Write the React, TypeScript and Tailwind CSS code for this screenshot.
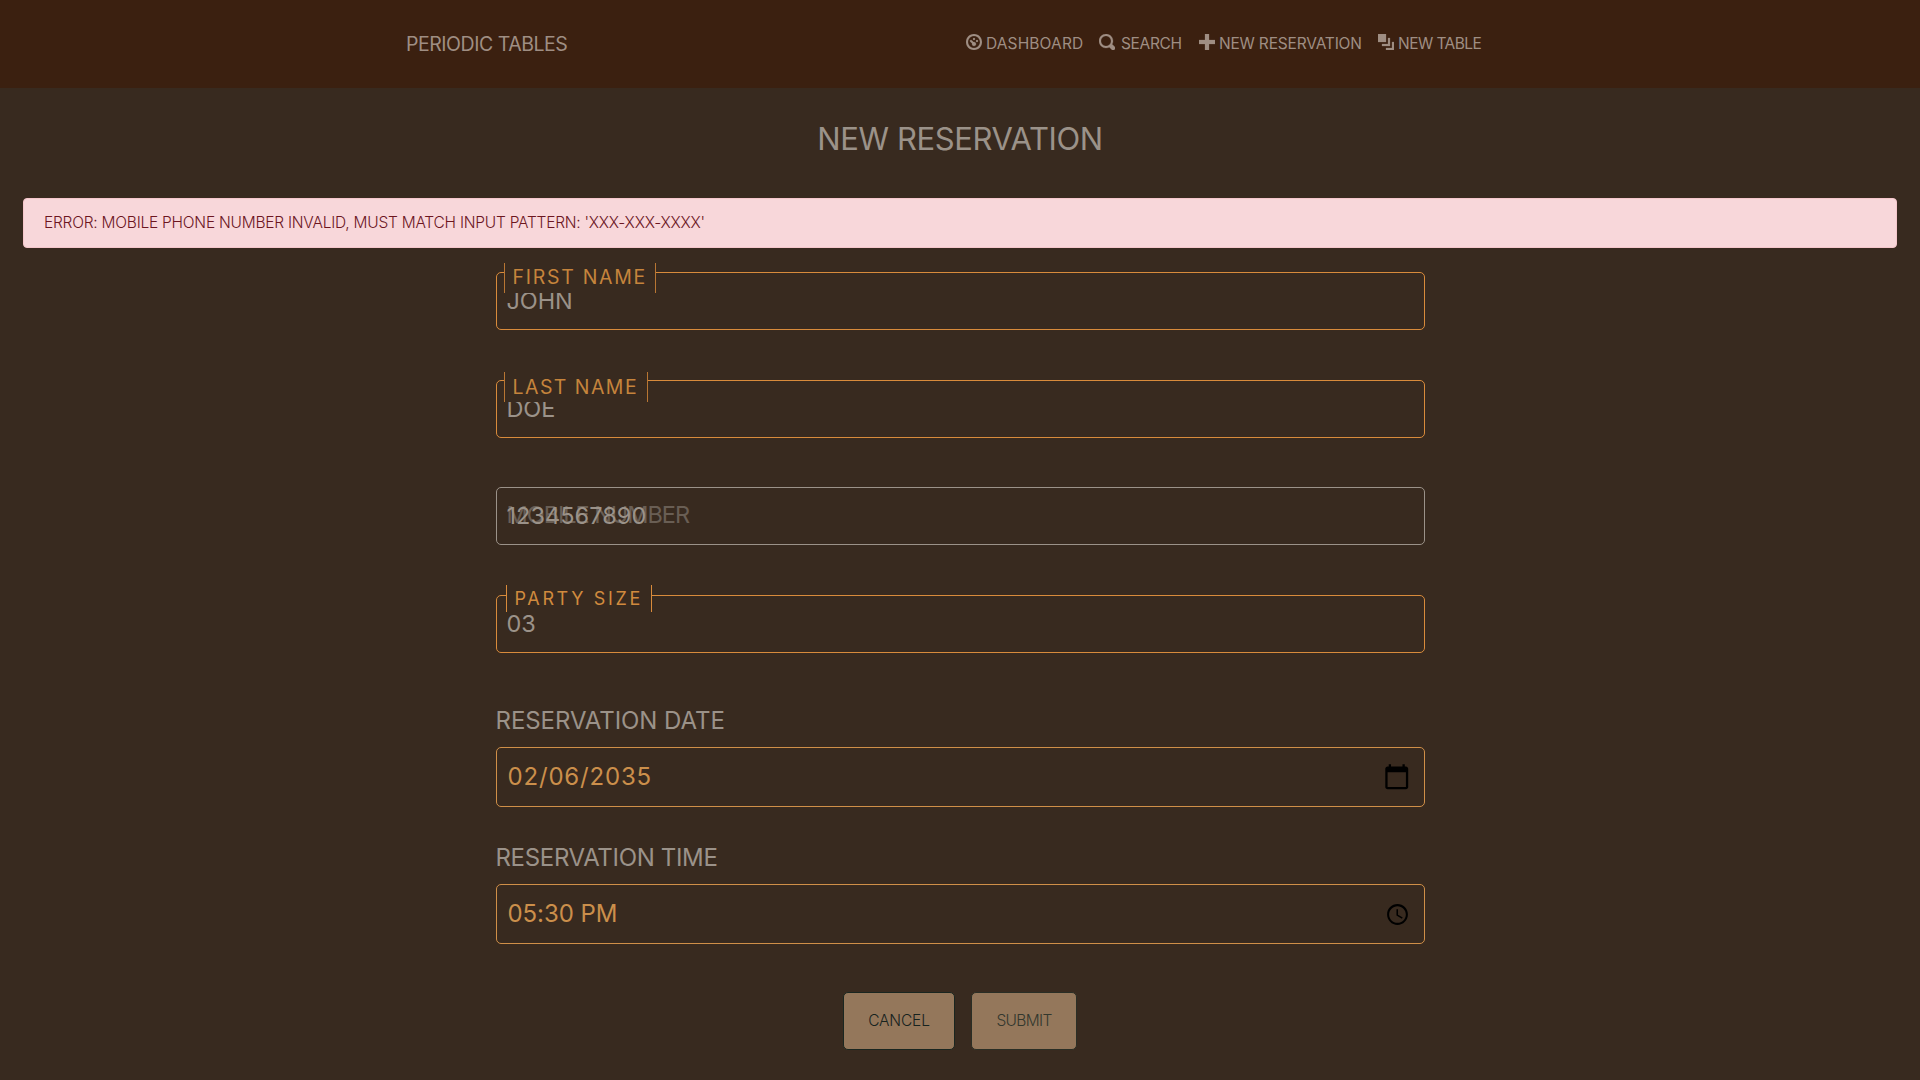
import React from "react";

const icons = {
  dashboard:
    "M4 0c-2.2 0-4 1.8-4 4s1.8 4 4 4 4-1.8 4-4-1.8-4-4-4zm0 1c1.66 0 3 1.34 3 3s-1.34 3-3 3-3-1.34-3-3 1.34-3 3-3zm0 1c-.28 0-.5.22-.5.5s.22.5.5.5.5-.22.5-.5-.22-.5-.5-.5zm-1.66 1a.5.5 0 0 0-.19.84l.91.91c-.02.08-.06.16-.06.25 0 .55.45 1 1 1s1-.45 1-1-.45-1-1-1c-.09 0-.17.04-.25.06l-.91-.91a.5.5 0 0 0-.44-.16.5.5 0 0 0-.06 0zm3.16 0c-.28 0-.5.22-.5.5s.22.5.5.5.5-.22.5-.5-.22-.5-.5-.5z",
  search:
    "M3.5 0c-1.93 0-3.5 1.57-3.5 3.5s1.57 3.5 3.5 3.5c.59 0 1.17-.14 1.66-.41a1 1 0 0 0 .13.13l1 1a1.02 1.02 0 1 0 1.44-1.44l-1-1a1 1 0 0 0-.16-.13c.27-.49.44-1.06.44-1.66 0-1.93-1.55-3.5-3.5-3.5zm0 1c1.39 0 2.5 1.1 2.5 2.5 0 .66-.24 1.27-.66 1.72-.01.01-.02.02-.03.03a1 1 0 0 0-.13.13c-.44.4-1.04.63-1.69.63-1.39 0-2.5-1.1-2.5-2.5s1.1-2.5 2.5-2.5z",
  plus: "M3 0v3h-3v2h3v3h2v-3h3v-2h-3v-3h-2z",
  layers: "M0 0v4h4v-4h-4zm5 2v3h-3v1h4v-4h-1zm2 2v3h-3v1h4v-4h-1z",
};

function NavLink({ icon, text, className }: { icon: keyof typeof icons; text: string; className: string }) {
  return (
    <a className={`flex items-start whitespace-nowrap text-[15.5px] leading-[18px] ${className}`}>
      <svg viewBox="0 0 8 8" className="size-4 shrink-0" fill="currentColor" stroke="currentColor" strokeWidth={0.12}>
        <path d={icons[icon]} />
      </svg>
      <span className="pt-px">{text}</span>
    </a>
  );
}

function FloatingField({
  label,
  value,
  className,
  labelClass,
  valueClass,
}: {
  label: string;
  value: string;
  className: string;
  labelClass: string;
  valueClass: string;
}) {
  return (
    <div className={`relative flex h-[58px] items-center rounded-[5px] border text-[23.5px] leading-none ${className}`}>
      <span className={valueClass}>{value}</span>
      <label className={`absolute flex items-center whitespace-nowrap ${labelClass}`}>{label}</label>
    </div>
  );
}

export default function App() {
  return (
    <div className="flex h-[1080px] w-full flex-col overflow-hidden bg-[#382a1f] font-['Inter',sans-serif] text-[#9b9289]">
      <nav className="flex h-[88px] shrink-0 items-start bg-[#3b2010] text-[#9f8e83]">
        <a className="ml-[406px] mt-8 w-[560px] text-[19.5px] leading-6 tracking-[-0.46px]">PERIODIC TABLES</a>
        <div className="mt-[34px] flex">
          <NavLink icon="dashboard" text="DASHBOARD" className="w-[133px] gap-1 tracking-[0.13px]" />
          <NavLink icon="search" text="SEARCH" className="w-[100px] gap-1.5 tracking-[-0.35px]" />
          <NavLink icon="plus" text="NEW RESERVATION" className="w-[179px] gap-1 tracking-[-0.19px]" />
          <NavLink icon="layers" text="NEW TABLE" className="gap-1 tracking-[-0.55px]" />
        </div>
      </nav>

      <h1 className="mt-[31px] text-center text-[31px] leading-10 tracking-[-0.37px]">NEW RESERVATION</h1>

      <div className="mx-[23px] mt-[39px] flex h-[50px] shrink-0 items-center rounded border border-[#f5c6cb] bg-[#f8d7da] pl-5 text-[15.5px] font-[340] tracking-[-0.235px] text-[#6c161f]">
        ERROR: MOBILE PHONE NUMBER INVALID, MUST MATCH INPUT PATTERN: 'XXX-XXX-XXXX'
      </div>

      <form className="mx-auto mt-6 flex w-[929px] flex-col">
        <FloatingField
          label="FIRST NAME"
          value="JOHN"
          className="border-[#d98b3b]"
          valueClass="pl-[10px] tracking-[-0.1px]"
          labelClass="left-[7px] -top-[10px] h-[30px] w-[152px] border-x border-[#b87633] bg-[#382a1f] pl-2 text-[19.5px] tracking-[1.72px] text-[#c5843c]"
        />
        <FloatingField
          label="LAST NAME"
          value="DOE"
          className="mt-[50px] border-[#d98b3b]"
          valueClass="pl-[10px] tracking-[-0.1px]"
          labelClass="left-[7px] -top-[9px] h-[30px] w-[144px] border-x border-[#b87633] bg-[#382a1f] pl-2 pt-px text-[19.5px] tracking-[1.45px] text-[#c5843c]"
        />
        <FloatingField
          label="MOBILE NUMBER"
          value="1234567890"
          className="mt-[49px] border-[#9b9289]"
          valueClass="pl-[10px] tracking-[0.05px]"
          labelClass="left-[10px] top-0 h-[54px] tracking-[-1.03px] opacity-50"
        />
        <FloatingField
          label="PARTY SIZE"
          value="03"
          className="mt-[50px] border-[#d98b3b]"
          valueClass="pl-[10px] tracking-[-0.13px]"
          labelClass="left-[9px] -top-[11px] h-[27px] w-[146px] border-x border-[#d98b3b] bg-[#382a1f] pl-2 pt-px text-[18px] tracking-[2.65px] text-[#d08a3e]"
        />

        <label className="mt-[52px] h-8 text-2xl leading-8 tracking-[-0.06px]">RESERVATION DATE</label>
        <div className="mt-[10px] flex h-[60px] items-center justify-between rounded-[5px] border border-[#d08f48] pl-[11px] pr-[13px] text-2xl leading-none text-[#cb8f4b]">
          <span className="tracking-[0.82px]">02/06/2035</span>
          <svg viewBox="0 0 24 24" className="size-[27.5px]" fill="#000">
            <path d="M20 3h-1V1h-2v2H7V1H5v2H4c-1.1 0-2 .9-2 2v16c0 1.1.9 2 2 2h16c1.1 0 2-.9 2-2V5c0-1.1-.9-2-2-2zm0 18H4V8h16v13z" />
          </svg>
        </div>

        <label className="mt-[35px] h-8 text-2xl leading-8 tracking-[-0.33px]">RESERVATION TIME</label>
        <div className="mt-[10px] flex h-[60px] items-center justify-between rounded-[5px] border border-[#d08f48] pl-[11px] pr-[14px] text-2xl leading-none text-[#cb8f4b]">
          <span className="tracking-[-0.08px]">05:30 PM</span>
          <svg viewBox="0 0 24 24" className="size-[25px]" fill="#000">
            <path d="M11.99 2C6.47 2 2 6.48 2 12s4.47 10 9.99 10C17.52 22 22 17.52 22 12S17.52 2 11.99 2zM12 20c-4.42 0-8-3.58-8-8s3.58-8 8-8 8 3.58 8 8-3.58 8-8 8zm.5-13H11v6l5.25 3.15.75-1.23-4.5-2.67z" />
          </svg>
        </div>
      </form>

      <div className="ml-[843px] mt-12 flex gap-4 text-[15.5px] font-[340]">
        <button className="flex h-[58px] w-28 items-center justify-center rounded-[5px] border border-[#1a2620] bg-[#94775b] tracking-[-0.15px] text-[#17231f]">
          CANCEL
        </button>
        <button className="flex h-[58px] w-[106px] items-center justify-center rounded-[5px] border border-[#2a2e25] bg-[#94775b] tracking-[-0.65px] text-[#33382e]">
          SUBMIT
        </button>
      </div>
    </div>
  );
}
